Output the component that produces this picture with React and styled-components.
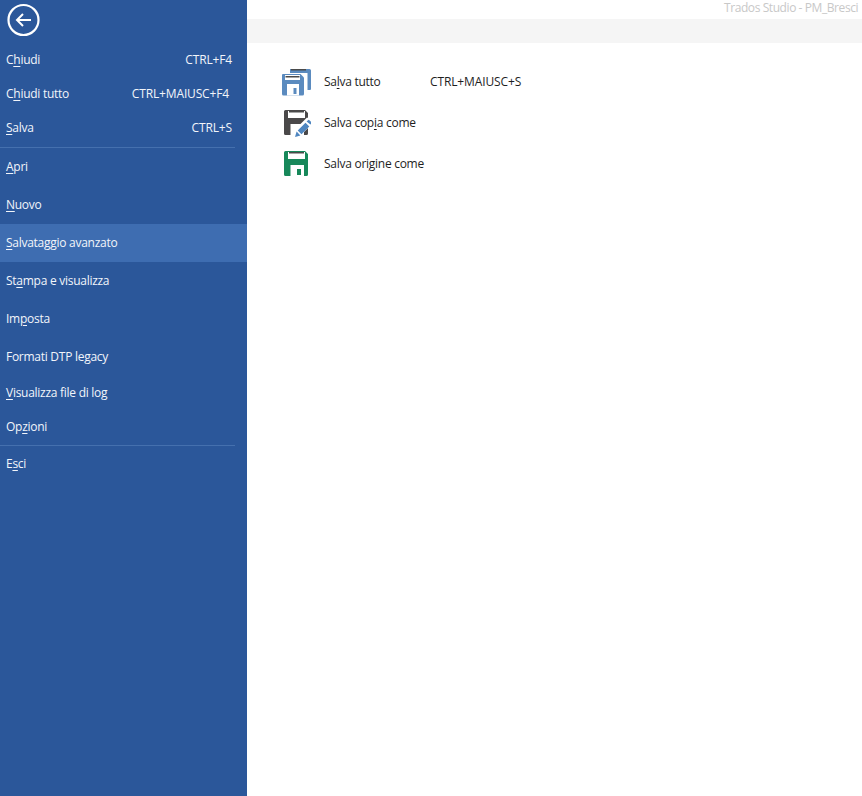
import React from "react";
import styled, { createGlobalStyle } from "styled-components";

const GlobalStyle = createGlobalStyle`
    html, body {
        margin: 0;
        padding: 0;
        background: #FFF;
    }
    body {
        font-family: "Open Sans", "Noto Sans", sans-serif;
        font-size: 12px;
    }
`;

const Page = styled.div`
    width: 862px;
    height: 796px;
    display: flex;
    overflow: hidden;
`;

const Sidebar = styled.nav`
    width: 247px;
    flex-shrink: 0;
    background-color: #2B579A;
    color: #F2F5FA;
    display: flex;
    flex-direction: column;
`;

const BackRow = styled.div`
    height: 43px;
    padding: 3px 0 0 7px;
    box-sizing: border-box;
`;

const BackButton = styled.svg`
    display: block;
    width: 34px;
    height: 34px;
`;

const MenuRow = styled.div`
    height: ${(props) => props.$height}px;
    box-sizing: border-box;
    padding: 0 ${(props) => props.$right || 15}px 2px 6px;
    display: flex;
    align-items: center;
    justify-content: space-between;
    white-space: nowrap;
    letter-spacing: -0.27px;
    background-color: ${(props) => (props.$active ? "#3E6DB1" : "transparent")};
`;

const Shortcut = styled.span`
    letter-spacing: -0.15px;
`;

const Divider = styled.div`
    height: 1px;
    margin: ${(props) => props.$margin};
    margin-right: 12px;
    background-color: #4570AE;
`;

const Key = styled.span`
    text-decoration: underline;
    text-underline-offset: 2px;
    text-decoration-thickness: 1px;
`;

const Main = styled.main`
    flex: 1;
    min-width: 0;
    display: flex;
    flex-direction: column;
`;

const TitleBar = styled.div`
    height: 19px;
    padding-left: 477px;
    line-height: 15px;
    color: #C8C8C8;
    white-space: nowrap;
    letter-spacing: -0.42px;
`;

const Band = styled.div`
    height: 24px;
    background-color: #F5F5F5;
`;

const ActionList = styled.div`
    padding: 18px 0 0 34px;
    display: flex;
    flex-direction: column;
`;

const ActionRow = styled.div`
    height: 41px;
    display: flex;
    align-items: center;
    color: #1E1E1E;
    white-space: nowrap;
    letter-spacing: -0.27px;
`;

const ActionIcon = styled.svg`
    width: 30px;
    height: 30px;
    flex-shrink: 0;
    margin-right: 13px;
`;

const ActionLabel = styled.span`
    width: 106px;
`;

const ActionShortcut = styled.span`
    letter-spacing: -0.12px;
`;

const FLOPPY_BODY = "M1.500 0H21l3 3v20.500a1.500 1.500 0 0 1-1.500 1.500h-21A1.500 1.500 0 0 1 0 23.500v-22A1.500 1.500 0 0 1 1.500 0z";

function BackIcon() {
    return (
        <BackButton viewBox="0 0 34 34" fill="none" stroke="#FFF">
            <circle cx="16.5" cy="17" r="15" strokeWidth="2.2" />
            <path d="M24 17H10M16 11l-6 6 6 6" strokeWidth="2" />
        </BackButton>
    );
}

// body, white top window with its dark bar, white lower panel with the little door
function Floppy({ color, dx, dy }) {
    return (
        <g transform={`translate(${dx} ${dy})`}>
            <path fill={color} d={FLOPPY_BODY} />
            <path fill="#FFF" d="M4 1h17v7H4zM6.500 14H20v11H6.500z" />
            <path fill="#4A4A4A" d="M5 1h15v1.500H5z" />
            <path fill={color} d="M13 18h4v6h-4z" />
        </g>
    );
}

function SaveAllIcon() {
    return (
        <ActionIcon viewBox="0 0 30 30">
            <path fill="#5B8BBF" d="M9 2h19.500a1.500 1.500 0 0 1 1.500 1.500V22a1 1 0 0 1-1 1h-2.500V6H9z" />
            <path fill="#4A4A4A" d="M10 2h15v1.500H10z" />
            <path fill="#5B8BBF" d="M2 7h17.500l3.500 3.500V27a1.500 1.500 0 0 1-1.500 1.500H2.500A1.500 1.500 0 0 1 1 27V8a1 1 0 0 1 1-1z" />
            <path fill="#FFF" d="M4 8h15v5H4zM6 17h12v11.500H6z" />
            <path fill="#4A4A4A" d="M4.500 9h14v1.500h-14z" />
            <path fill="#5B8BBF" d="M12.500 21h3v6h-3z" />
        </ActionIcon>
    );
}

function SaveCopyIcon() {
    return (
        <ActionIcon viewBox="0 0 30 30">
            <Floppy color="#4A4849" dx="3" dy="2" />
            <path fill="#FFF" d="M11.500 30l2.500-8.500L26 9.500l4 2V17L19.500 27.500z" />
            <path fill="#4F86C0" d="M14 29l1.600-5.400 3.800 3.800zM16.700 22.500l7.800-7.800 3.800 3.800-7.800 7.800zM25.600 13.600l1.400-1.400a1 1 0 0 1 1.400 0l2 2a1 1 0 0 1 0 1.400l-1 1z" />
        </ActionIcon>
    );
}

function SaveSourceIcon() {
    return (
        <ActionIcon viewBox="0 0 30 30">
            <Floppy color="#17885A" dx="3" dy="2" />
        </ActionIcon>
    );
}

function App() {
    return (
        <Page>
            <GlobalStyle />
            <Sidebar>
                <BackRow>
                    <BackIcon />
                </BackRow>
                <MenuRow $height={34}>
                    <span>C<Key>h</Key>iudi</span>
                    <Shortcut>CTRL+F4</Shortcut>
                </MenuRow>
                <MenuRow $height={34} $right={18}>
                    <span>C<Key>h</Key>iudi tutto</span>
                    <Shortcut>CTRL+MAIUSC+F4</Shortcut>
                </MenuRow>
                <MenuRow $height={34}>
                    <span><Key>S</Key>alva</span>
                    <Shortcut>CTRL+S</Shortcut>
                </MenuRow>
                <Divider $margin="2px 0 0 0" />
                <MenuRow $height={38}><span><Key>A</Key>pri</span></MenuRow>
                <MenuRow $height={38}><span><Key>N</Key>uovo</span></MenuRow>
                <MenuRow $height={38} $active><span><Key>S</Key>alvataggio avanzato</span></MenuRow>
                <MenuRow $height={38}><span>St<Key>a</Key>mpa e visualizza</span></MenuRow>
                <MenuRow $height={38}><span>Im<Key>p</Key>osta</span></MenuRow>
                <MenuRow $height={38}><span>Formati DTP legacy</span></MenuRow>
                <MenuRow $height={34}><span><Key>V</Key>isualizza file di log</span></MenuRow>
                <MenuRow $height={34}><span>Op<Key>z</Key>ioni</span></MenuRow>
                <Divider $margin="1px 0 0 0" />
                <MenuRow $height={36}><span>E<Key>s</Key>ci</span></MenuRow>
            </Sidebar>
            <Main>
                <TitleBar>Trados Studio - PM_Bresci</TitleBar>
                <Band />
                <ActionList>
                    <ActionRow>
                        <SaveAllIcon />
                        <ActionLabel>Sa<Key>l</Key>va tutto</ActionLabel>
                        <ActionShortcut>CTRL+MAIUSC+S</ActionShortcut>
                    </ActionRow>
                    <ActionRow>
                        <SaveCopyIcon />
                        <ActionLabel>Salva cop<Key>i</Key>a come</ActionLabel>
                    </ActionRow>
                    <ActionRow>
                        <SaveSourceIcon />
                        <ActionLabel>Salva ori<Key>g</Key>ine come</ActionLabel>
                    </ActionRow>
                </ActionList>
            </Main>
        </Page>
    );
}

export default App;
